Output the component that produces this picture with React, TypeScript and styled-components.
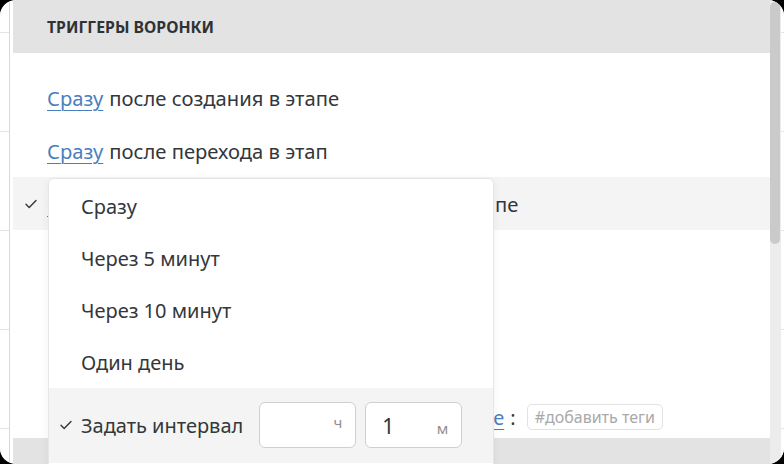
import React from 'react';
import styled, { createGlobalStyle } from 'styled-components';

const GlobalStyle = createGlobalStyle`
  html, body {
    margin: 0;
    padding: 0;
    background: #000;
  }
  body {
    font-family: "Noto Sans", "Open Sans", Arial, sans-serif;
    color: #33373b;
  }
`;

const Frame = styled.div`
  width: 784px;
  height: 464px;
  border-radius: 16px;
  overflow: hidden;
  display: flex;
  background: #fff;
`;

const PageEdge = styled.div<{ $w: number }>`
  width: ${({ $w }) => $w}px;
  flex: none;
  background: repeating-linear-gradient(
    to bottom,
    #fff 0px,
    #fff 32px,
    #e4e4e4 32px,
    #e4e4e4 33px,
    #fff 33px,
    #fff 99px
  );
`;

const LeftEdge = styled(PageEdge)`
  border-right: 1px solid #d8d8d8;
  margin-right: 3px;
`;

const Modal = styled.div`
  flex: 1;
  display: flex;
  min-width: 0;
`;

const Content = styled.div`
  flex: 1;
  display: flex;
  flex-direction: column;
  position: relative;
  min-width: 0;
`;

const Header = styled.div`
  height: 53px;
  flex: none;
  background: #e3e3e3;
  display: flex;
  align-items: center;
  padding-left: 34px;
  font-size: 15.8px;
  font-weight: 700;
  color: #2f3336;
  text-transform: uppercase;
`;

const Body = styled.div`
  flex: 1;
  display: flex;
  flex-direction: column;
  background: #fff;
  padding-top: 18px;
  overflow: hidden;
`;

const Row = styled.div<{ $active?: boolean }>`
  height: 53px;
  flex: none;
  display: flex;
  align-items: center;
  padding-left: 12px;
  font-size: 20.2px;
  white-space: nowrap;
  background: ${({ $active }) => ($active ? '#f4f4f4' : 'transparent')};
`;

const Mark = styled.span`
  width: 22px;
  flex: none;
  display: flex;
  align-items: center;
`;

const Link = styled.span<{ $tail?: boolean }>`
  color: #4a7fbf;
  text-decoration: underline;
  text-underline-offset: 4px;
  text-decoration-thickness: 1px;
  margin-right: ${({ $tail }) => ($tail ? 0 : 6)}px;
`;

const Spacer = styled.div`
  flex: 1;
`;

const TagRow = styled.div`
  height: 34px;
  flex: none;
  display: flex;
  align-items: center;
  padding: 0 0 4px 34px;
  font-size: 20px;
  white-space: nowrap;
`;

const Colon = styled.span`
  margin: 0 11px 0 6px;
`;

const TagInput = styled.div`
  height: 24px;
  padding: 0 7px;
  border: 1px solid #e2e2e2;
  border-radius: 5px;
  display: flex;
  align-items: center;
  font-size: 16px;
  color: #a9a9a9;
`;

const Footer = styled.div`
  height: 26px;
  flex: none;
  background: #e3e3e3;
`;

const Scrollbar = styled.div`
  width: 11px;
  flex: none;
  background: #ececec;
  padding: 2px 1px 0 0;
  box-sizing: border-box;
`;

const Thumb = styled.div`
  height: 242px;
  border-radius: 5px;
  background: #cacaca;
`;

const Dropdown = styled.div`
  position: absolute;
  left: 35px;
  top: 178px;
  width: 446px;
  height: 300px;
  box-sizing: border-box;
  padding-top: 1px;
  background: #fff;
  border: 1px solid #e6e6e6;
  border-radius: 6px;
  box-shadow: 0 2px 8px rgba(0, 0, 0, 0.06);
  overflow: hidden;
`;

const Option = styled.div`
  height: 52px;
  display: flex;
  align-items: center;
  padding-left: 32px;
  font-size: 20px;
  color: #33373b;
`;

const CustomOption = styled.div`
  display: flex;
  align-items: center;
  padding: 14px 0 15px 11px;
  background: #f4f4f4;
  font-size: 20px;
  color: #33373b;
`;

const OptionMark = styled.span`
  width: 21px;
  flex: none;
  display: flex;
  align-items: center;
`;

const IntervalLabel = styled.span`
  margin-right: 16px;
`;

const Fields = styled.div`
  display: flex;
  gap: 9px;
`;

const Field = styled.div`
  width: 97px;
  height: 46px;
  box-sizing: border-box;
  background: #fff;
  border: 1px solid #cfcfcf;
  border-radius: 6px;
  display: flex;
  align-items: baseline;
  justify-content: space-between;
  padding: 9px 13px 0 16px;
`;

const FieldValue = styled.span`
  font-size: 21px;
  color: #2f3336;
`;

const FieldUnit = styled.span`
  font-size: 15px;
  color: #8f8f8f;
  margin-left: auto;
`;

const Check = () => (
  <svg width="12" height="10" viewBox="0 0 12 10">
    <polyline points="1,5.2 4.2,8.4 11,1.4" fill="none" stroke="#33373b" strokeWidth="1.4" strokeLinecap="round" strokeLinejoin="round" />
  </svg>
);

const options = ['Сразу', 'Через 5 минут', 'Через 10 минут', 'Один день'];

export default function App() {
  return (
    <>
      <GlobalStyle />
      <Frame>
        <LeftEdge $w={9} />
        <Modal>
          <Content>
            <Header>Триггеры воронки</Header>
            <Body>
              <Row>
                <Mark />
                <Link>Сразу</Link>после создания в этапе
              </Row>
              <Row>
                <Mark />
                <Link>Сразу</Link>после перехода в этап
              </Row>
              <Row $active>
                <Mark>
                  <Check />
                </Mark>
                <Link>Сразу</Link>после перехода или создания дел в этапе
              </Row>
              <Spacer />
              <TagRow>
                после создания в этапе добавить&nbsp;<Link $tail>теги к сделке</Link>
                <Colon>:</Colon>
                <TagInput>#добавить теги</TagInput>
              </TagRow>
            </Body>
            <Footer />
            <Dropdown>
              {options.map((o) => (
                <Option key={o}>{o}</Option>
              ))}
              <CustomOption>
                <OptionMark>
                  <Check />
                </OptionMark>
                <IntervalLabel>Задать интервал</IntervalLabel>
                <Fields>
                  <Field>
                    <FieldUnit>ч</FieldUnit>
                  </Field>
                  <Field>
                    <FieldValue>1</FieldValue>
                    <FieldUnit>м</FieldUnit>
                  </Field>
                </Fields>
              </CustomOption>
            </Dropdown>
          </Content>
          <Scrollbar>
            <Thumb />
          </Scrollbar>
        </Modal>
        <PageEdge $w={3} />
      </Frame>
    </>
  );
}
